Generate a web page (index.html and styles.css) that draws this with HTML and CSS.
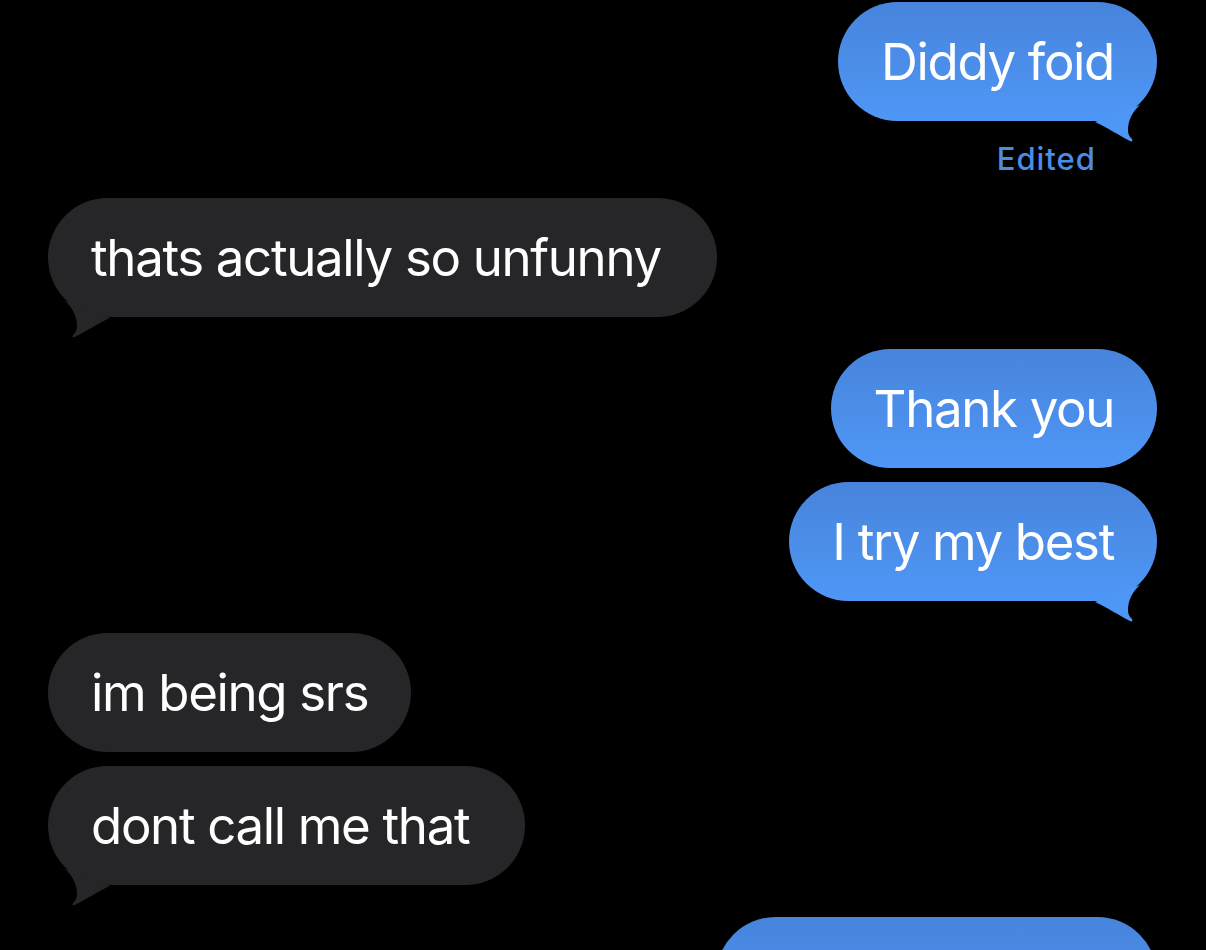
FILE: index.html
```html
<!DOCTYPE html>
<html>
	<head>
		<meta name="viewport" content="width=device-width,initial-scale=1.0">
		<title>Messages</title>
		<link rel="stylesheet" href="styles.css">
	</head>
	<body>
		<div class="thread">
			<div class="bubble sent">
				Diddy foid
				<svg class="tail" viewBox="0 0 70 62"><path d="M50 25 C43 31 38 40 38 50 C38 55 40 57 42 59 C43 61 42 62 40 61 C30 56 18 48 5 42 Z"/></svg>
			</div>
			<div class="edited">Edited</div>

			<div class="bubble received group tailed">
				thats actually so unfunny
				<svg class="tail" viewBox="0 0 70 62"><path d="M50 25 C43 31 38 40 38 50 C38 55 40 57 42 59 C43 61 42 62 40 61 C30 56 18 48 5 42 Z"/></svg>
			</div>

			<div class="bubble sent group">Thank you</div>
			<div class="bubble sent">
				I try my best
				<svg class="tail" viewBox="0 0 70 62"><path d="M50 25 C43 31 38 40 38 50 C38 55 40 57 42 59 C43 61 42 62 40 61 C30 56 18 48 5 42 Z"/></svg>
			</div>

			<div class="bubble received group">im being srs</div>
			<div class="bubble received tailed">
				dont call me that
				<svg class="tail" viewBox="0 0 70 62"><path d="M50 25 C43 31 38 40 38 50 C38 55 40 57 42 59 C43 61 42 62 40 61 C30 56 18 48 5 42 Z"/></svg>
			</div>

			<div class="bubble sent group next">&nbsp;</div>
		</div>
	</body>
</html>
```

FILE: styles.css
```css
html, body {
	margin: 0;
	height: 100%;
	background: #000;
	overflow: hidden;
}

body {
	font-family: Inter, "Noto Sans", sans-serif;
	-webkit-font-smoothing: antialiased;
}

.thread {
	display: flex;
	flex-direction: column;
	padding: 2px 49px 0 48px;
}

.bubble {
	position: relative;
	font-size: 51px;
	line-height: 63px;
	letter-spacing: -1.35px;
	color: #fff;
	padding: 28px 43px;
	border-radius: 60px;
	margin-top: 14px;
	white-space: nowrap;
}

.bubble:first-child {
	margin-top: 0;
}

/* space between speaker groups */
.bubble.group {
	margin-top: 32px;
}

.sent {
	align-self: flex-end;
	background: linear-gradient(to bottom, #4784dc, #4f97f6);
}

.received {
	align-self: flex-start;
	background: #262628;
}

.received.tailed {
	padding-right: 56px;
}

.tail {
	position: absolute;
	width: 70px;
	height: 62px;
	bottom: -21px;
}

.sent .tail {
	right: -3px;
	fill: #4f97f6;
}

.received .tail {
	left: -3px;
	fill: #262628;
	transform: scaleX(-1);
}

.edited {
	align-self: flex-end;
	margin: 20px 61px 0 0;
	font-size: 31px;
	line-height: 36px;
	letter-spacing: 1px;
	font-weight: 500;
	color: #4a8de2;
}

.edited + .bubble.group {
	margin-top: 21px;
}

.next {
	width: 355px;
}
```
